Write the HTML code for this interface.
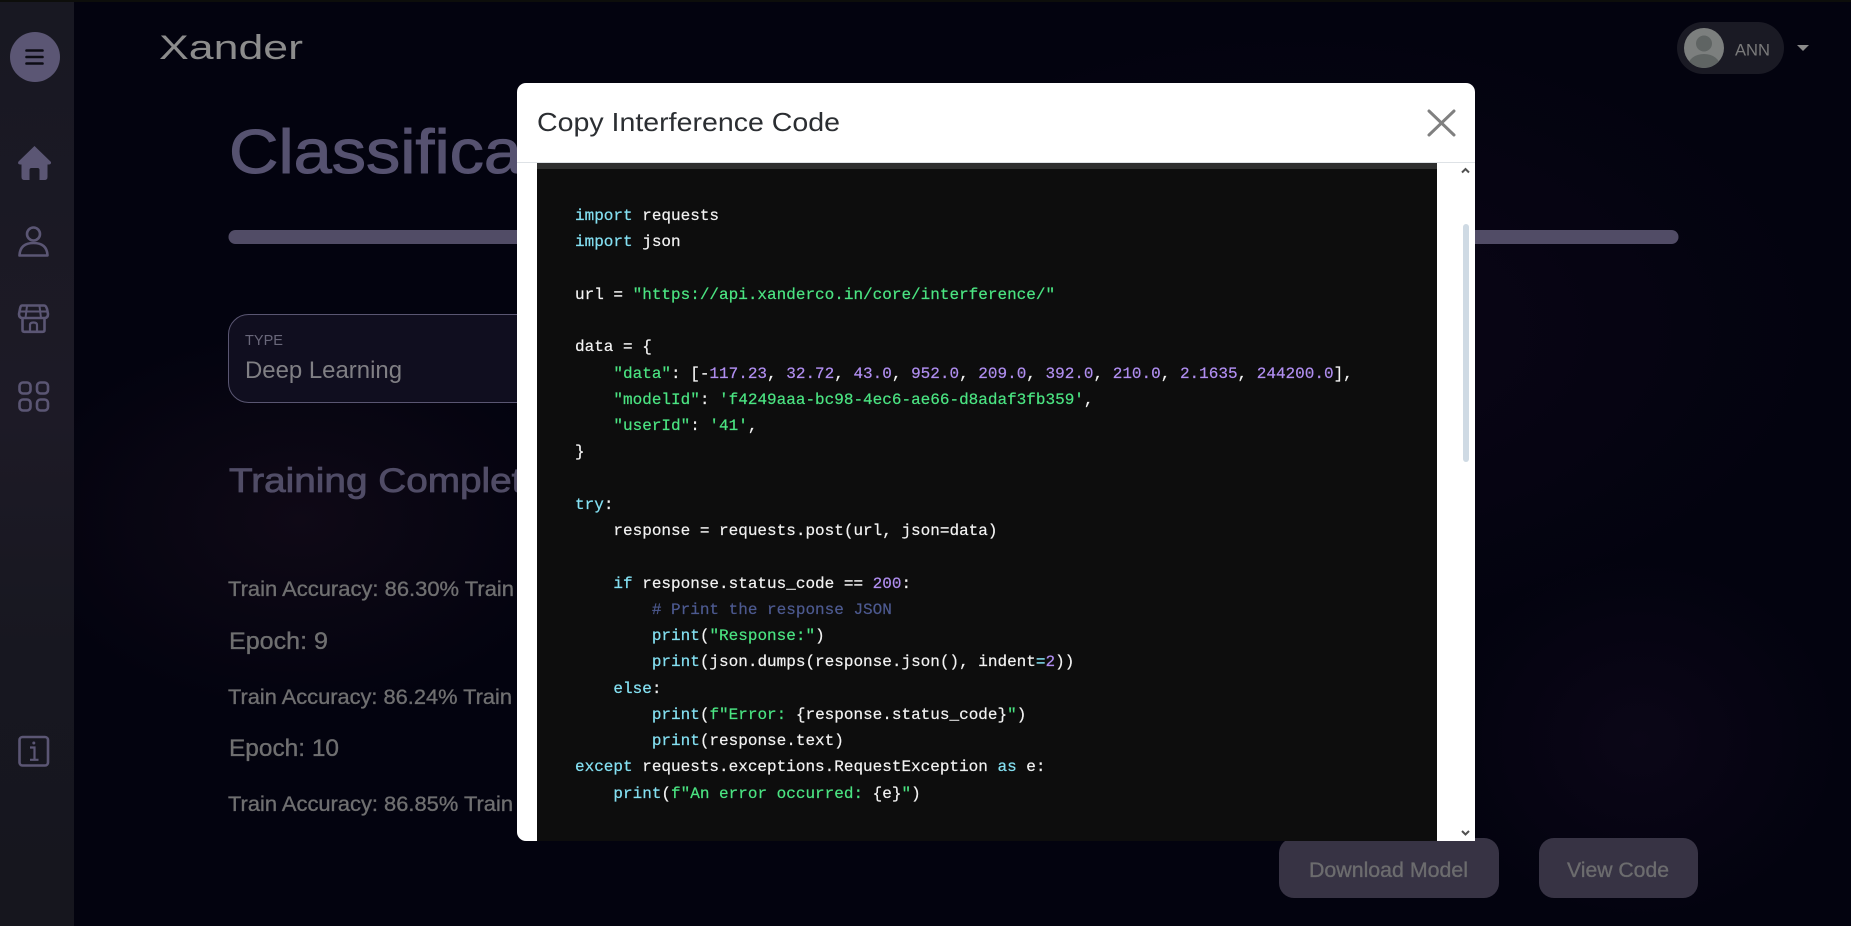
<!DOCTYPE html>
<html><head><meta charset="utf-8"><title>Xander</title>
<style>
html,body{margin:0;padding:0;width:1851px;height:926px;overflow:hidden;background:#03030f;font-family:"Liberation Sans",sans-serif}
.abs{position:absolute}
#bg{position:absolute;left:0;top:0;width:1851px;height:926px}
#modal{position:absolute;left:517px;top:83px;width:958px;height:758px;background:#fff;border-radius:9px 9px 0 9px;overflow:hidden}
#hdr{position:absolute;left:0;top:79px;width:958px;height:1px;background:#dee2e6}
#code{position:absolute;left:20px;top:80px;width:900px;height:678px;background:#0d0d0d;border-top:6px solid #2f2f2f;box-sizing:border-box;overflow:hidden}
pre{position:absolute;left:38px;top:27px;padding-top:7px;margin:0;font-family:"Liberation Mono",monospace;font-size:16px;line-height:26.25px;color:#f2f2f2;-webkit-text-stroke:.2px}
.k{color:#84e0f2}.s{color:#4be482}.n{color:#b08ef0}.c{color:#4d5a90}
</style></head><body>
<svg id="bg" width="1851" height="926" viewBox="0 0 1851 926" font-family="Liberation Sans, sans-serif">
<defs>
<radialGradient id="g1" cx="50%" cy="50%" r="50%"><stop offset="0" stop-color="#0f0916"/><stop offset="1" stop-color="#0f0916" stop-opacity="0"/></radialGradient>
<radialGradient id="g2" cx="50%" cy="50%" r="50%"><stop offset="0" stop-color="#0b0617"/><stop offset="1" stop-color="#0b0617" stop-opacity="0"/></radialGradient>
<linearGradient id="side" x1="0" y1="0" x2="0" y2="1"><stop offset="0" stop-color="#181822"/><stop offset=".45" stop-color="#1d1a26"/><stop offset=".7" stop-color="#171720"/><stop offset="1" stop-color="#16161e"/></linearGradient>
</defs>
<rect width="1851" height="926" fill="#03030f"/>
<ellipse cx="300" cy="520" rx="280" ry="190" fill="url(#g1)"/>
<ellipse cx="1300" cy="330" rx="520" ry="300" fill="url(#g2)"/>
<ellipse cx="1640" cy="740" rx="200" ry="180" fill="url(#g2)"/>
<rect width="1851" height="2" fill="#0d0e0b"/>
<rect y="2" width="74" height="924" fill="url(#side)"/>

<circle cx="35" cy="57" r="25" fill="#5b5674"/>
<path d="M26.500 50.500H42.500M26.500 57H42.500M26.500 63.500H42.500" stroke="#0c0c14" stroke-width="2.600" stroke-linecap="round"/>

<!-- home -->
<path d="M34.500 146 L51 162 Q51.500 164.500 48.500 164.500 L47.500 164.500 L47.500 177 Q47.500 180 44.500 180 L39.500 180 L39.500 170 Q39.500 168 37.500 168 L31.500 168 Q29.500 168 29.500 170 L29.500 180 L24.500 180 Q21.500 180 21.500 177 L21.500 164.500 L20 164.500 Q17 164 18.500 161.500 Z" fill="#5b5674"/>
<!-- person -->
<g fill="none" stroke="#5b5674" stroke-width="2.600">
<circle cx="33.500" cy="234" r="6.500"/>
<path d="M19.500 255.500 Q20 243 33.500 243 Q47 243 47.500 255.500 Z" stroke-linejoin="round"/>
<!-- store -->
<path d="M22 305.500 H44 Q46 305.500 47 309 L48 314 Q48 318 44.500 318 H22.500 Q19 318 19 314 L20 309 Q20.500 305.500 22 305.500 Z" stroke-linejoin="round"/>
<path d="M19.500 311.500 H47.500 M27 306 L25.500 318 M39.500 306 L41 318" stroke-width="2"/>
<path d="M22.500 318 V330 Q22.500 331.800 24.500 331.800 H42.500 Q44.500 331.800 44.500 330 V318"/>
<path d="M30 331 V325 Q30 322.500 33.500 322.500 Q37 322.500 37 325 V331" stroke-width="2.200"/>
<!-- grid -->
<rect x="19.500" y="382.500" width="11" height="11" rx="3.500"/>
<rect x="37" y="382.500" width="11" height="11" rx="3.500"/>
<rect x="19.500" y="399.500" width="11" height="11" rx="3.500"/>
<rect x="37" y="399.500" width="11" height="11" rx="3.500"/>
<!-- info -->
<rect x="19.500" y="737" width="28.500" height="28.500" rx="3"/>
<path d="M30 747.500 H34.500 V759.500 M30 759.800 H38.500" stroke-width="2.200"/>
</g>
<circle cx="33.800" cy="743" r="1.500" fill="#5b5674"/>

<text x="159" y="59" font-size="34" textLength="144" lengthAdjust="spacingAndGlyphs" fill="#8c8c8c">Xander</text>

<text x="229" y="173" font-size="62" textLength="293" lengthAdjust="spacingAndGlyphs" fill="#565270" stroke="#565270" stroke-width="1">Classifica</text>
<rect x="228.500" y="230" width="1450" height="14" rx="7" fill="#514c66"/>

<rect x="228.500" y="314.500" width="700" height="88" rx="20" fill="#100e1f" stroke="#5a5672"/>
<text x="245" y="345" font-size="15" textLength="38" lengthAdjust="spacingAndGlyphs" fill="#69677a">TYPE</text>
<text x="245" y="378" font-size="24" textLength="157" lengthAdjust="spacingAndGlyphs" fill="#807f84">Deep Learning</text>

<text x="229" y="492" font-size="34" textLength="315" lengthAdjust="spacingAndGlyphs" fill="#504c66" stroke="#504c66" stroke-width=".8">Training Complete</text>

<g fill="#6f6f70" stroke="#6f6f70" stroke-width=".35">
<text x="228" y="596" font-size="21" textLength="286" lengthAdjust="spacingAndGlyphs">Train Accuracy: 86.30% Train</text>
<text x="229" y="649" font-size="24" textLength="99" lengthAdjust="spacingAndGlyphs">Epoch: 9</text>
<text x="228" y="704" font-size="21" textLength="284" lengthAdjust="spacingAndGlyphs">Train Accuracy: 86.24% Train</text>
<text x="229" y="756" font-size="24" textLength="110" lengthAdjust="spacingAndGlyphs">Epoch: 10</text>
<text x="228" y="811" font-size="21" textLength="285" lengthAdjust="spacingAndGlyphs">Train Accuracy: 86.85% Train</text>
</g>

<rect x="1677" y="22" width="107" height="52" rx="26" fill="#1a1a24"/>
<clipPath id="av"><circle cx="1704" cy="48" r="20"/></clipPath>
<circle cx="1704" cy="48" r="20" fill="#7c7f7e"/>
<g clip-path="url(#av)" fill="#5f6463"><circle cx="1704" cy="43.500" r="8"/><ellipse cx="1704" cy="66" rx="16" ry="12"/></g>
<text x="1735" y="55.500" font-size="17" textLength="35" lengthAdjust="spacingAndGlyphs" fill="#7b7b7b">ANN</text>
<path d="M1797 45 H1809 L1803 51 Z" fill="#8a8a8a"/>

<rect x="1279" y="838" width="220" height="60" rx="15" fill="#373344"/>
<rect x="1539" y="838" width="159" height="60" rx="15" fill="#373344"/>
<g fill="#6c6c6e" stroke="#6c6c6e" stroke-width=".35">
<text x="1309" y="877" font-size="21" textLength="159" lengthAdjust="spacingAndGlyphs">Download Model</text>
<text x="1567" y="877" font-size="21" textLength="102" lengthAdjust="spacingAndGlyphs">View Code</text>
</g>
</svg>

<div id="modal">
<div id="hdr"></div>
<svg class="abs" style="left:0;top:0" width="958" height="79" font-family="Liberation Sans, sans-serif">
<text x="20" y="48" font-size="26" textLength="303" lengthAdjust="spacingAndGlyphs" fill="#2b2e32">Copy Interference Code</text>
<path d="M912 28 L937 52 M937 28 L912 52" stroke="#808080" stroke-width="3" stroke-linecap="round"/>
</svg>
<div id="code"><pre><span class="k">import</span> requests
<span class="k">import</span> json

url = <span class="s">"https://api.xanderco.in/core/interference/"</span>

data = {
    <span class="s">"data"</span>: [-<span class="n">117.23</span>, <span class="n">32.72</span>, <span class="n">43.0</span>, <span class="n">952.0</span>, <span class="n">209.0</span>, <span class="n">392.0</span>, <span class="n">210.0</span>, <span class="n">2.1635</span>, <span class="n">244200.0</span>],
    <span class="s">"modelId"</span>: <span class="s">'f4249aaa-bc98-4ec6-ae66-d8adaf3fb359'</span>,
    <span class="s">"userId"</span>: <span class="s">'41'</span>,
}

<span class="k">try</span>:
    response = requests.post(url, json=data)

    <span class="k">if</span> response.status_code == <span class="n">200</span>:
        <span class="c"># Print the response JSON</span>
        <span class="k">print</span>(<span class="s">"Response:"</span>)
        <span class="k">print</span>(json.dumps(response.json(), indent<span class="k">=</span><span class="n">2</span>))
    <span class="k">else</span>:
        <span class="k">print</span>(<span class="s">f"Error: </span>{response.status_code}<span class="s">"</span>)
        <span class="k">print</span>(response.text)
<span class="k">except</span> requests.exceptions.RequestException <span class="k">as</span> e:
    <span class="k">print</span>(<span class="s">f"An error occurred: </span>{e}<span class="s">"</span>)</pre></div>
<svg class="abs" style="left:940px;top:80px" width="18" height="678">
<path d="M5 9.500 L8.500 6 L12 9.500" fill="none" stroke="#505050" stroke-width="2"/>
<rect x="6" y="61" width="6" height="238" rx="3" fill="#cfdae4"/>
<path d="M5 668 L8.500 671.500 L12 668" fill="none" stroke="#505050" stroke-width="2"/>
</svg>
</div>
</body></html>
